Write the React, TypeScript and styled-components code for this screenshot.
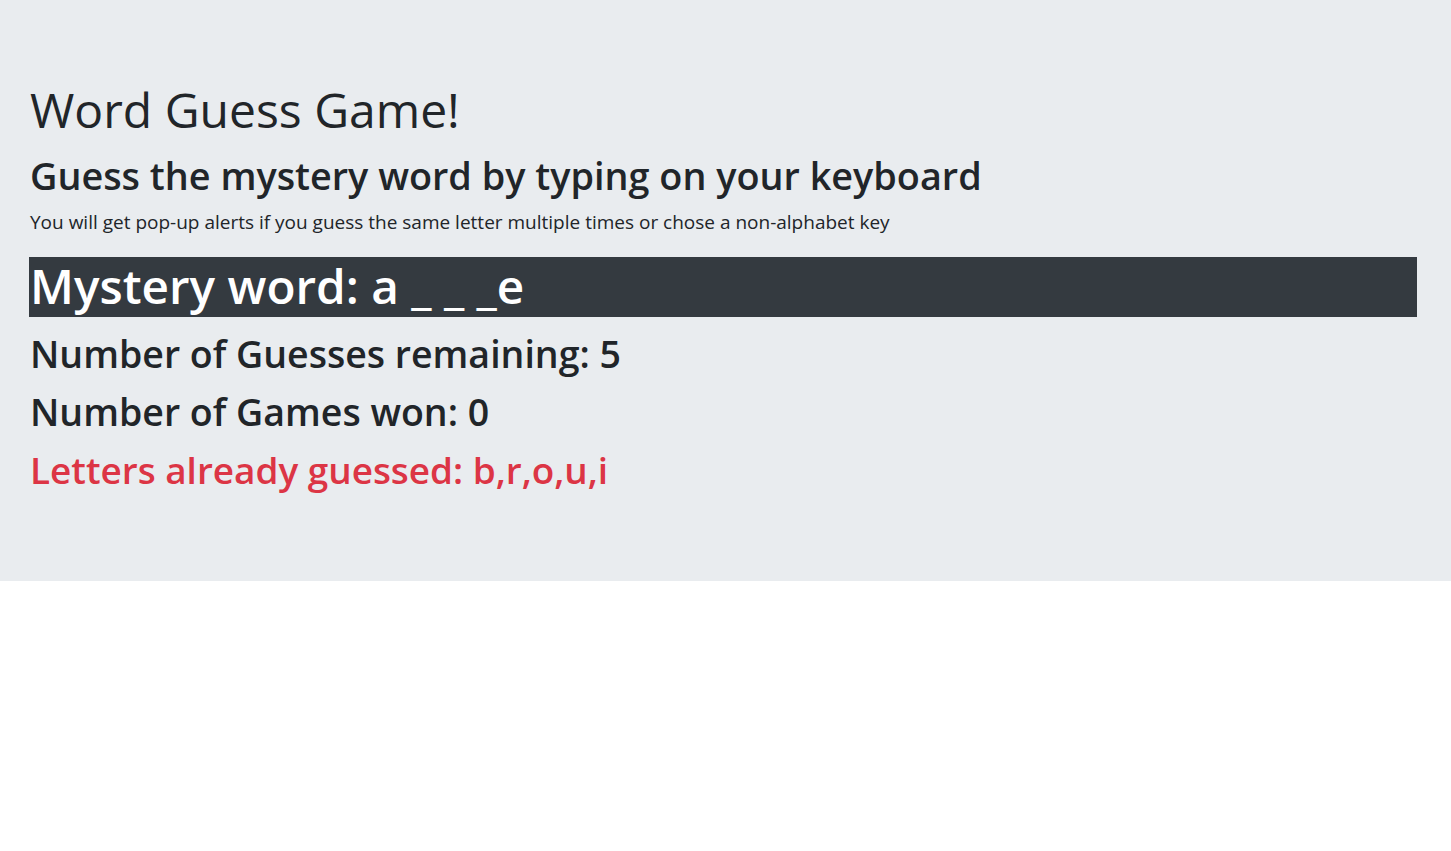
import React from 'react';
import styled, { createGlobalStyle } from 'styled-components';

const GlobalStyle = createGlobalStyle`
  html, body {
    margin: 0;
    padding: 0;
    background: #fff;
    color: #212529;
    font-family: "Open Sans", "Noto Sans", "Liberation Sans", sans-serif;
  }
`;

const Jumbotron = styled.div`
  background-color: #e9ecef;
  padding: 81px 34px 82px 30px;
`;

const Title = styled.h1`
  margin: 0 0 14px;
  font-size: 48px;
  font-weight: 400;
  line-height: 1.2;
`;

const Subtitle = styled.h2`
  margin: 0 0 10px;
  font-size: 37.8px;
  font-weight: 600;
  line-height: 1.2;
`;

const Note = styled.p`
  margin: 0 0 21px;
  font-size: 19px;
  line-height: 1.5;
`;

const MysteryBar = styled.h1`
  margin: 0 0 8px -1px;
  padding: 0 0 0 1px;
  height: 60px;
  background-color: #343a40;
  color: #fff;
  font-size: 47.7px;
  font-weight: 600;
  line-height: 58px;
`;

const Stat = styled.h1<{ $danger?: boolean }>`
  margin: 0;
  font-size: ${p => (p.$danger ? '36.9px' : '37.5px')};
  font-weight: 600;
  line-height: 58px;
  color: ${p => (p.$danger ? '#dc3545' : '#212529')};
`;

const App: React.FC = () => {
  const word = 'a _ _ _e';
  const guessed = ['b', 'r', 'o', 'u', 'i'];

  return (
    <>
      <GlobalStyle />
      <Jumbotron>
        <Title>Word Guess Game!</Title>
        <Subtitle>Guess the mystery word by typing on your keyboard</Subtitle>
        <Note>
          You will get pop-up alerts if you guess the same letter multiple times or chose a non-alphabet key
        </Note>
        <MysteryBar>Mystery word: {word}</MysteryBar>
        <Stat>Number of Guesses remaining: 5</Stat>
        <Stat>Number of Games won: 0</Stat>
        <Stat $danger>Letters already guessed: {guessed.join(',')}</Stat>
      </Jumbotron>
    </>
  );
};

export default App;
